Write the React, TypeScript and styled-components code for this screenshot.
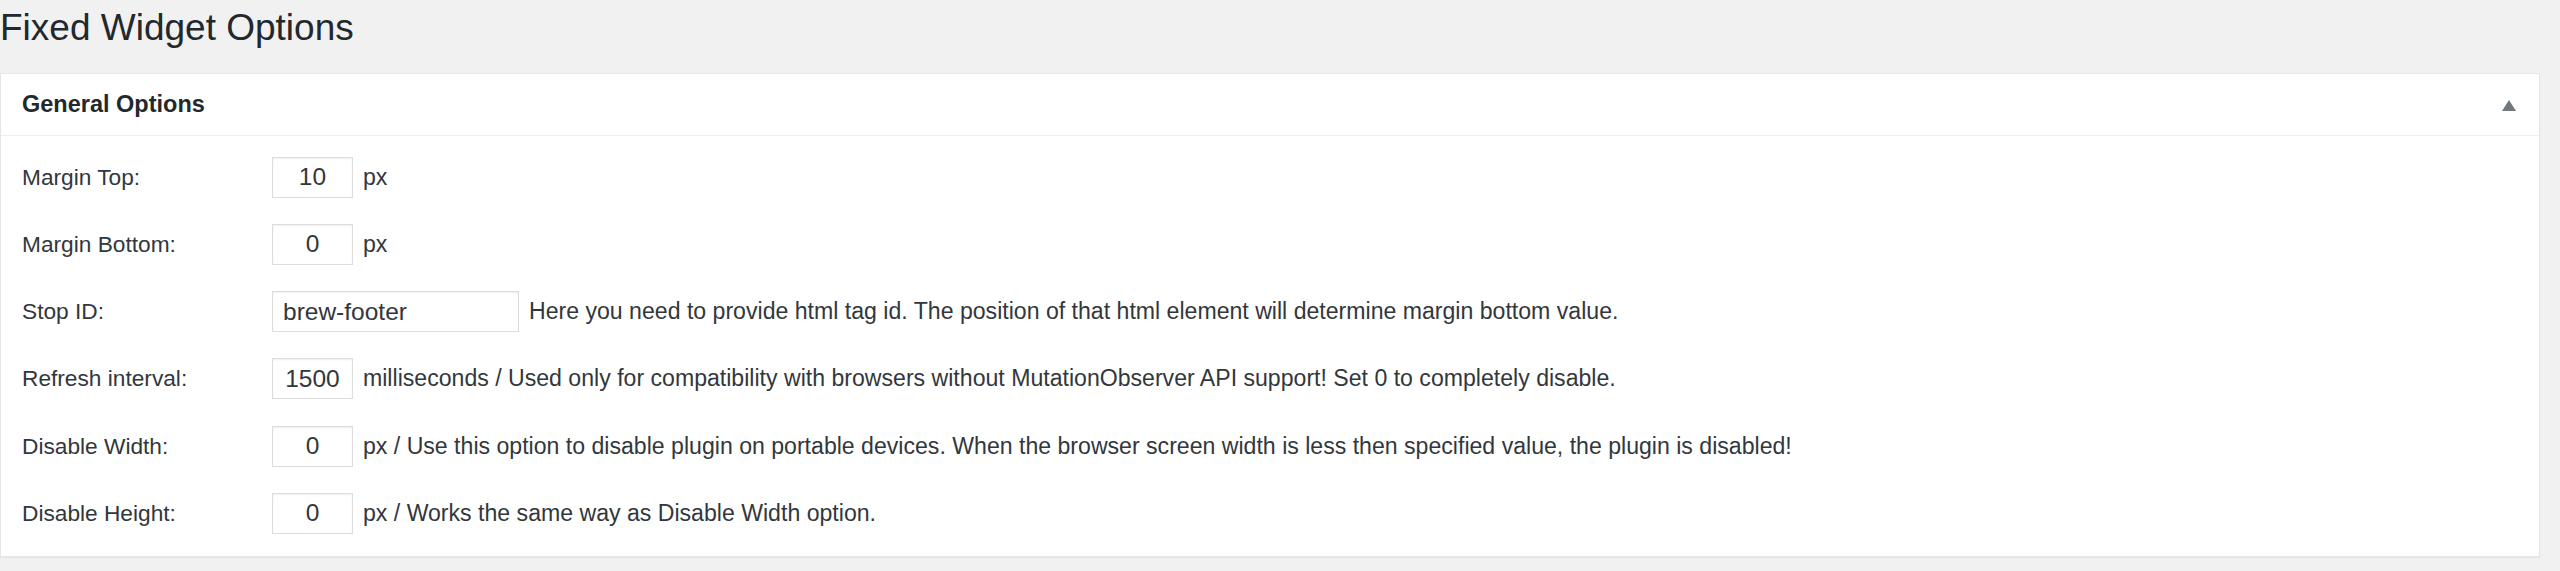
import React from "react";
import styled, { createGlobalStyle } from "styled-components";

const GlobalStyle = createGlobalStyle`
 html, body {
  margin: 0;
  padding: 0;
  background: #f1f1f1;
 }
 body {
  font-family: "Liberation Sans", Arial, sans-serif;
  color: #32373c;
 }
`;

const Wrap = styled.div`
 padding: 0 20px 13px 0;
`;

const Title = styled.h1`
 margin: 0 0 22px;
 padding-top: 5px;
 font-size: 37px;
 line-height: 46px;
 font-weight: 400;
 color: #23282d;
`;

const Panel = styled.div`
 background: #fff;
 border: 1px solid #e5e5e5;
 box-shadow: 0 1px 1px rgba(0, 0, 0, 0.04);
`;

const PanelHeader = styled.div`
 display: flex;
 align-items: center;
 justify-content: space-between;
 height: 61px;
 padding: 0 23px 0 21px;
 border-bottom: 1px solid #eee;
`;

const PanelTitle = styled.h2`
 margin: 0;
 font-size: 23.5px;
 font-weight: 700;
 color: #23282d;
`;

const Toggle = styled.span`
 width: 0;
 height: 0;
 border-left: 7px solid transparent;
 border-right: 7px solid transparent;
 border-bottom: 11px solid #72777c;
 margin-top: 2px;
`;

const PanelBody = styled.div`
 display: flex;
 flex-direction: column;
 gap: 27.3px;
 padding: 21px 21px 23px;
`;

const Row = styled.div`
 display: flex;
 align-items: center;
 height: 40px;
`;

const Label = styled.label`
 width: 250px;
 flex-shrink: 0;
 font-size: 22.7px;
 color: #32373c;
`;

const Field = styled.input<{ $wide?: boolean }>`
 box-sizing: border-box;
 width: ${({ $wide }) => ($wide ? "247px" : "81px")};
 height: 41px;
 margin: 0 10px 0 0;
 padding: 0 10px;
 border: 1px solid #ddd;
 border-radius: 0;
 box-shadow: inset 0 1px 2px rgba(0, 0, 0, 0.07);
 background: #fff;
 font-family: "Liberation Sans", Arial, sans-serif;
 font-size: 24.5px;
 color: #32373c;
 text-align: ${({ $wide }) => ($wide ? "left" : "center")};
 outline: none;
`;

const Note = styled.span`
 font-size: 23.1px;
 color: #32373c;
 white-space: nowrap;
`;

type Option = { label: string; value: string; note: string; wide?: boolean };

const options: Option[] = [
 { label: "Margin Top:", value: "10", note: "px" },
 { label: "Margin Bottom:", value: "0", note: "px" },
 {
  label: "Stop ID:",
  value: "brew-footer",
  wide: true,
  note: "Here you need to provide html tag id. The position of that html element will determine margin bottom value.",
 },
 {
  label: "Refresh interval:",
  value: "1500",
  note: "milliseconds / Used only for compatibility with browsers without MutationObserver API support! Set 0 to completely disable.",
 },
 {
  label: "Disable Width:",
  value: "0",
  note: "px / Use this option to disable plugin on portable devices. When the browser screen width is less then specified value, the plugin is disabled!",
 },
 {
  label: "Disable Height:",
  value: "0",
  note: "px / Works the same way as Disable Width option.",
 },
];

export default function App() {
 return (
  <Wrap>
   <GlobalStyle />
   <Title>Fixed Widget Options</Title>
   <Panel>
    <PanelHeader>
     <PanelTitle>General Options</PanelTitle>
     <Toggle />
    </PanelHeader>
    <PanelBody>
     {options.map((o) => (
      <Row key={o.label}>
       <Label>{o.label}</Label>
       <Field $wide={o.wide} defaultValue={o.value} />
       <Note>{o.note}</Note>
      </Row>
     ))}
    </PanelBody>
   </Panel>
  </Wrap>
 );
}
